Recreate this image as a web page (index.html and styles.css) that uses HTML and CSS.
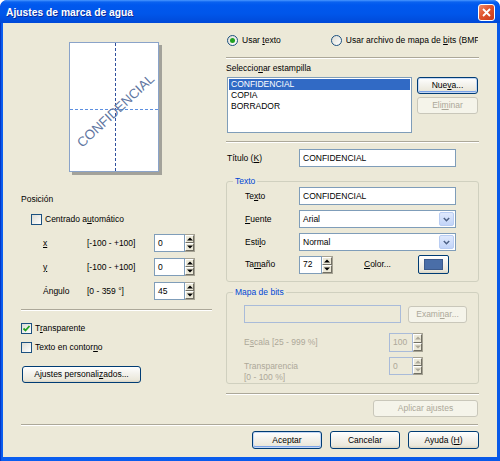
FILE: index.html
```html
<!DOCTYPE html>
<html lang="es">
<head>
    <meta charset="UTF-8">
    <title>Ajustes de marca de agua</title>
    <link rel="stylesheet" href="styles.css">
</head>
<body>
    <div class="window">
        <div class="titlebar">
            <span class="title">Ajustes de marca de agua</span>
            <span class="close">
                <svg width="9" height="9" viewBox="0 0 9 9"><path d="M1 1 L8 8 M8 1 L1 8" stroke="#fff" stroke-width="1.8" fill="none"/></svg>
            </span>
        </div>

        <div class="client">
            <div class="columns">
                <!-- columna izquierda -->
                <div class="left">
                    <div class="preview">
                        <div class="vline"></div>
                        <div class="hline"></div>
                        <span class="mark">CONFIDENCIAL</span>
                    </div>

                    <div class="label posicion">Posición</div>
                    <div class="check-row indent">
                        <span class="check"></span>
                        <span>Centrado a<u>u</u>tomático</span>
                    </div>

                    <div class="pos-row first">
                        <span class="axis"><u>x</u></span>
                        <span class="range">[-100 - +100]</span>
                        <span class="input small">0</span>
                        <span class="spin"><span class="up"></span><span class="down"></span></span>
                    </div>
                    <div class="pos-row">
                        <span class="axis"><u>y</u></span>
                        <span class="range">[-100 - +100]</span>
                        <span class="input small">0</span>
                        <span class="spin"><span class="up"></span><span class="down"></span></span>
                    </div>
                    <div class="pos-row">
                        <span class="axis">Ángulo</span>
                        <span class="range">[0 - 359 °]</span>
                        <span class="input small">45</span>
                        <span class="spin"><span class="up"></span><span class="down"></span></span>
                    </div>

                    <div class="sep sep-left"></div>

                    <div class="check-row transp">
                        <span class="check checked">
                            <svg width="9" height="9" viewBox="0 0 9 9"><path d="M1.5 4.5 L3.5 6.5 L7.5 2" stroke="#21a121" stroke-width="1.8" fill="none"/></svg>
                        </span>
                        <span>T<u>r</u>ansparente</span>
                    </div>
                    <div class="check-row contorno">
                        <span class="check"></span>
                        <span>Texto en contor<u>n</u>o</span>
                    </div>

                    <div class="btn btn-custom">Ajustes personali<u>z</u>ados...</div>
                </div>

                <!-- columna derecha -->
                <div class="right">
                    <div class="radio-row">
                        <span class="radio on"></span>
                        <span class="radio-text">Usar <u>t</u>exto</span>
                        <span class="radio second"></span>
                        <span class="radio-text clip">Usar archivo de mapa de <u>b</u>its (BMP)</span>
                    </div>

                    <div class="sep sep-radio"></div>

                    <div class="label estampilla">Seleccio<u>n</u>ar estampilla</div>
                    <div class="list-row">
                        <div class="listbox">
                            <div class="item selected">CONFIDENCIAL</div>
                            <div class="item">COPIA</div>
                            <div class="item">BORRADOR</div>
                        </div>
                        <div class="list-buttons">
                            <div class="btn default">Nue<u>v</u>a...</div>
                            <div class="btn disabled">Eli<u>m</u>inar</div>
                        </div>
                    </div>

                    <div class="sep sep-list"></div>

                    <div class="row titulo">
                        <span class="row-label">Título (<u>K</u>)</span>
                        <span class="input wide">CONFIDENCIAL</span>
                    </div>

                    <div class="group group-texto">
                        <span class="legend">Texto</span>
                        <div class="row g-first">
                            <span class="row-label in-group">Te<u>x</u>to</span>
                            <span class="input wide">CONFIDENCIAL</span>
                        </div>
                        <div class="row">
                            <span class="row-label in-group"><u>F</u>uente</span>
                            <span class="select">
                                <span class="select-value">Arial</span>
                                <span class="drop">
                                    <svg width="7" height="5" viewBox="0 0 7 5"><path d="M0.8 1 L3.5 3.7 L6.2 1" stroke="#4d6185" stroke-width="1.5" fill="none"/></svg>
                                </span>
                            </span>
                        </div>
                        <div class="row">
                            <span class="row-label in-group">Esti<u>l</u>o</span>
                            <span class="select">
                                <span class="select-value">Normal</span>
                                <span class="drop">
                                    <svg width="7" height="5" viewBox="0 0 7 5"><path d="M0.8 1 L3.5 3.7 L6.2 1" stroke="#4d6185" stroke-width="1.5" fill="none"/></svg>
                                </span>
                            </span>
                        </div>
                        <div class="row tamano">
                            <span class="row-label in-group">Ta<u>m</u>año</span>
                            <span class="input tiny">72</span>
                            <span class="spin"><span class="up"></span><span class="down"></span></span>
                            <span class="color-label"><u>C</u>olor...</span>
                            <span class="btn color-btn"><span class="swatch"></span></span>
                        </div>
                    </div>

                    <div class="group group-bmp">
                        <span class="legend">Mapa de bits</span>
                        <div class="bmp-row">
                            <span class="input file-input"></span>
                            <span class="btn disabled examinar">Exami<u>n</u>ar...</span>
                        </div>
                        <div class="bmp-field escala">
                            <span class="bmp-label">E<u>s</u>cala [25 - 999 %]</span>
                            <span class="input off-input">100</span>
                            <span class="spin off"><span class="up"></span><span class="down"></span></span>
                        </div>
                        <div class="bmp-field transparencia">
                            <span class="bmp-label two-lines">Transparencia<br>[0 - 100 %]</span>
                            <span class="input off-input">0</span>
                            <span class="spin off"><span class="up"></span><span class="down"></span></span>
                        </div>
                    </div>

                    <div class="sep sep-apply"></div>
                    <div class="apply-row">
                        <span class="btn disabled apply">Aplicar ajustes</span>
                    </div>
                </div>
            </div>

            <div class="sep sep-bottom"></div>
            <div class="actions">
                <span class="btn default action">Aceptar</span>
                <span class="btn action">Cancelar</span>
                <span class="btn action ayuda">Ayuda (<u>H</u>)</span>
            </div>
        </div>
    </div>
</body>
</html>
```

FILE: styles.css
```css
* {
    margin: 0;
    padding: 0;
    box-sizing: border-box;
}

body {
    width: 500px;
    height: 461px;
    overflow: hidden;
    font-family: 'Liberation Sans', Arial, sans-serif;
    font-size: 8.5px;
    line-height: 13px;
    color: #000;
    background: #fff;
}

u {
    text-decoration-thickness: 1px;
    text-underline-offset: 1px;
}

.window {
    width: 500px;
    height: 461px;
    background: linear-gradient(90deg, #0019a8 0, #0855e6 1px, #0a5ef0 2px, #0859e8 100%);
    border-radius: 7px 7px 0 0;
    display: flex;
    flex-direction: column;
    overflow: hidden;
}

.titlebar {
    height: 23px;
    flex: none;
    display: flex;
    align-items: center;
    justify-content: space-between;
    padding: 0 5px 0 6px;
    background: linear-gradient(#4a98ff 0, #0a62f0 2px, #0058ee 5px, #0056ea 60%, #0049d8 100%);
    border-radius: 7px 7px 0 0;
}

.title {
    font-size: 10.3px;
    font-weight: bold;
    color: #fff;
    text-shadow: 1px 1px 0 #0a2a9a;
    padding-top: 2px;
}

.close {
    width: 17px;
    height: 17px;
    margin-top: 2px;
    border: 1px solid #fff;
    border-radius: 3px;
    background: linear-gradient(135deg, #f08a6a 0, #e0552e 45%, #c8391a 100%);
    display: flex;
    align-items: center;
    justify-content: center;
}

.client {
    height: 434px;
    margin: 0 3px;
    background: #ece9d8;
    padding: 0 18px;
}

.columns {
    display: flex;
    gap: 14px;
}

.left {
    width: 191px;
}

.right {
    width: 253px;
}

/* separadores grabados */
.sep {
    height: 2px;
    border-top: 1px solid #aca899;
    border-bottom: 1px solid #fff;
}

/* vista previa */
.preview {
    position: relative;
    width: 90px;
    height: 130px;
    margin: 19px 0 0 48px;
    background: #fff;
    border: 1px solid #8aa3c9;
    box-shadow: 3px 3px 0 #a3a29a;
    overflow: hidden;
}

.vline {
    position: absolute;
    left: 45px;
    top: 0;
    bottom: 0;
    border-left: 1px dashed #30509e;
}

.hline {
    position: absolute;
    top: 66px;
    left: 0;
    right: 0;
    border-top: 1px dashed #5c8fe0;
}

.mark {
    position: absolute;
    left: 52%;
    top: 53%;
    transform: translate(-50%, -50%) rotate(-43deg);
    font-size: 13.4px;
    line-height: 14px;
    color: #6075a0;
    white-space: nowrap;
}

.label {
    height: 13px;
}

.posicion {
    margin-top: 21px;
}

.check-row {
    display: flex;
    align-items: center;
    gap: 3px;
    height: 13px;
}

.check-row.indent {
    margin-top: 7px;
    padding-left: 10px;
}

.check {
    width: 11px;
    height: 11px;
    border: 1px solid #1c5180;
    background: linear-gradient(135deg, #dcdcd4, #fff);
    display: flex;
    align-items: center;
    justify-content: center;
}

.pos-row {
    display: flex;
    align-items: center;
    height: 18px;
    margin-top: 6px;
}

.pos-row.first {
    margin-top: 8px;
}

.axis {
    width: 66px;
    padding-left: 22px;
}

.range {
    width: 67px;
}

.input {
    height: 18px;
    border: 1px solid #7f9db9;
    background: #fff;
    padding: 0 0 0 3px;
    display: flex;
    align-items: center;
    white-space: nowrap;
    overflow: hidden;
}

.input.small {
    width: 31px;
}

.input.wide {
    width: 157px;
}

.input.tiny {
    width: 23px;
}

/* flechas del control numerico */
.spin {
    width: 10px;
    height: 18px;
    display: flex;
    flex-direction: column;
    border: 1px solid #a5a293;
    border-left: none;
}

.spin span {
    flex: 1;
    position: relative;
    background: #ece9d8;
    border: 1px solid;
    border-color: #fff #716f64 #716f64 #fff;
}

.spin span::after {
    content: '';
    position: absolute;
    left: 50%;
    top: 50%;
    transform: translate(-50%, -50%);
    border-left: 3px solid transparent;
    border-right: 3px solid transparent;
}

.spin .up::after {
    border-bottom: 3px solid #000;
}

.spin .down::after {
    border-top: 3px solid #000;
}

.spin.off span::after {
    border-bottom-color: #aca899;
    border-top-color: #aca899;
}

.sep-left {
    margin-top: 9px;
}

.check-row.transp {
    margin-top: 11px;
}

.check-row.contorno {
    margin-top: 6px;
}

/* botones */
.btn {
    height: 17px;
    border: 1px solid #003c74;
    border-radius: 3px;
    background: linear-gradient(#ffffff 0, #f4f3ee 40%, #ebe8db 85%, #d8d3c4 100%);
    display: flex;
    align-items: center;
    justify-content: center;
    white-space: nowrap;
}

.btn.default {
    box-shadow: inset 0 0 0 1px #c3d7f5, inset 0 -1px 0 1px #7aa2e8;
}

.btn.disabled {
    border-color: #c9c7ba;
    background: #f5f4ea;
    color: #aca899;
}

.btn-custom {
    width: 119px;
    margin: 12px 0 0 1px;
}

/* radios */
.radio-row {
    display: flex;
    align-items: center;
    height: 13px;
    margin-top: 11px;
    padding-left: 1px;
}

.radio {
    width: 11px;
    height: 11px;
    border: 1px solid #1c5180;
    border-radius: 50%;
    background: linear-gradient(135deg, #dcdcd4, #fff);
    display: flex;
    align-items: center;
    justify-content: center;
    flex: none;
}

.radio.on::after {
    content: '';
    width: 5px;
    height: 5px;
    border-radius: 50%;
    background: #21a121;
}

.radio-text {
    margin-left: 4px;
}

.radio.second {
    margin-left: 50px;
}

.radio-text.clip {
    width: 132px;
    overflow: hidden;
    white-space: nowrap;
}

.sep-radio {
    margin-top: 10px;
}

.estampilla {
    margin-top: 3px;
}

.list-row {
    display: flex;
    margin-top: 2px;
}

.listbox {
    width: 185px;
    height: 56px;
    margin-left: 1px;
    border: 1px solid #7f9db9;
    background: #fff;
    padding: 1px;
}

.item {
    height: 11px;
    line-height: 11px;
    padding-left: 2px;
}

.item.selected {
    background: #316ac5;
    color: #fff;
}

.list-buttons {
    width: 61px;
    margin-left: 5px;
    display: flex;
    flex-direction: column;
    gap: 3px;
}

.sep-list {
    margin-top: 8px;
}

.row {
    display: flex;
    align-items: center;
    height: 18px;
    margin-top: 5px;
}

.row.titulo {
    margin-top: 6px;
}

.row-label {
    width: 73px;
    padding-left: 1px;
}

.row-label.in-group {
    width: 72px;
    padding-left: 18px;
}

/* cuadros de grupo */
.group {
    position: relative;
    border: 1px solid #d0d0bf;
    border-radius: 3px;
}

.legend {
    position: absolute;
    top: -7px;
    left: 6px;
    padding: 0 2px;
    background: #ece9d8;
    color: #0046d5;
}

.group-texto {
    height: 101px;
    margin-top: 14px;
}

.row.g-first {
    margin-top: 5px;
}

.select {
    width: 157px;
    height: 18px;
    border: 1px solid #7f9db9;
    background: #fff;
    display: flex;
    align-items: center;
    justify-content: space-between;
    padding: 1px 1px 1px 3px;
}

.drop {
    width: 15px;
    height: 14px;
    border: 1px solid #b9cdf3;
    border-radius: 2px;
    background: linear-gradient(#dfe9fd, #c2d4f8);
    display: flex;
    align-items: center;
    justify-content: center;
}

.row.tamano {
    height: 19px;
    margin-top: 4px;
}

.tamano .spin {
    width: 11px;
}

.color-label {
    width: 54px;
    margin-left: 31px;
}

.btn.color-btn {
    width: 31px;
    height: 19px;
    border-radius: 2px;
}

.swatch {
    width: 19px;
    height: 11px;
    background: #4a6ea8;
    border: 1px solid #3c5a8c;
}

.group-bmp {
    height: 92px;
    margin-top: 10px;
    color: #aca899;
}

.bmp-row {
    display: flex;
    align-items: center;
    margin: 12px 0 0 17px;
}

.input.file-input {
    width: 157px;
    background: #ece9d8;
    border-color: #a9bbd9;
}

.examinar {
    width: 59px;
    margin-left: 7px;
}

.bmp-field {
    display: flex;
    margin-left: 17px;
}

.bmp-field.escala {
    align-items: center;
    margin-top: 10px;
}

.bmp-field.transparencia {
    margin-top: 5px;
}

.bmp-label {
    width: 145px;
}

.two-lines {
    line-height: 11px;
    padding-top: 4px;
}

.input.off-input {
    width: 24px;
    height: 19px;
    background: #ece9d8;
    border-color: #a9bbd9;
    color: #aca899;
}

.transparencia .input.off-input {
    height: 18px;
}

.spin.off {
    height: 19px;
}

.transparencia .spin.off {
    height: 18px;
}

.sep-apply {
    margin-top: 9px;
}

.apply-row {
    display: flex;
    justify-content: flex-end;
    margin-top: 5px;
    padding-right: 1px;
}

.apply {
    width: 105px;
}

.sep-bottom {
    margin: 7px 1px 0 0;
}

.actions {
    display: flex;
    justify-content: flex-end;
    gap: 8px;
    margin-top: 5px;
}

.btn.action {
    width: 70px;
    height: 18px;
}

.btn.ayuda {
    width: 71px;
}
```
